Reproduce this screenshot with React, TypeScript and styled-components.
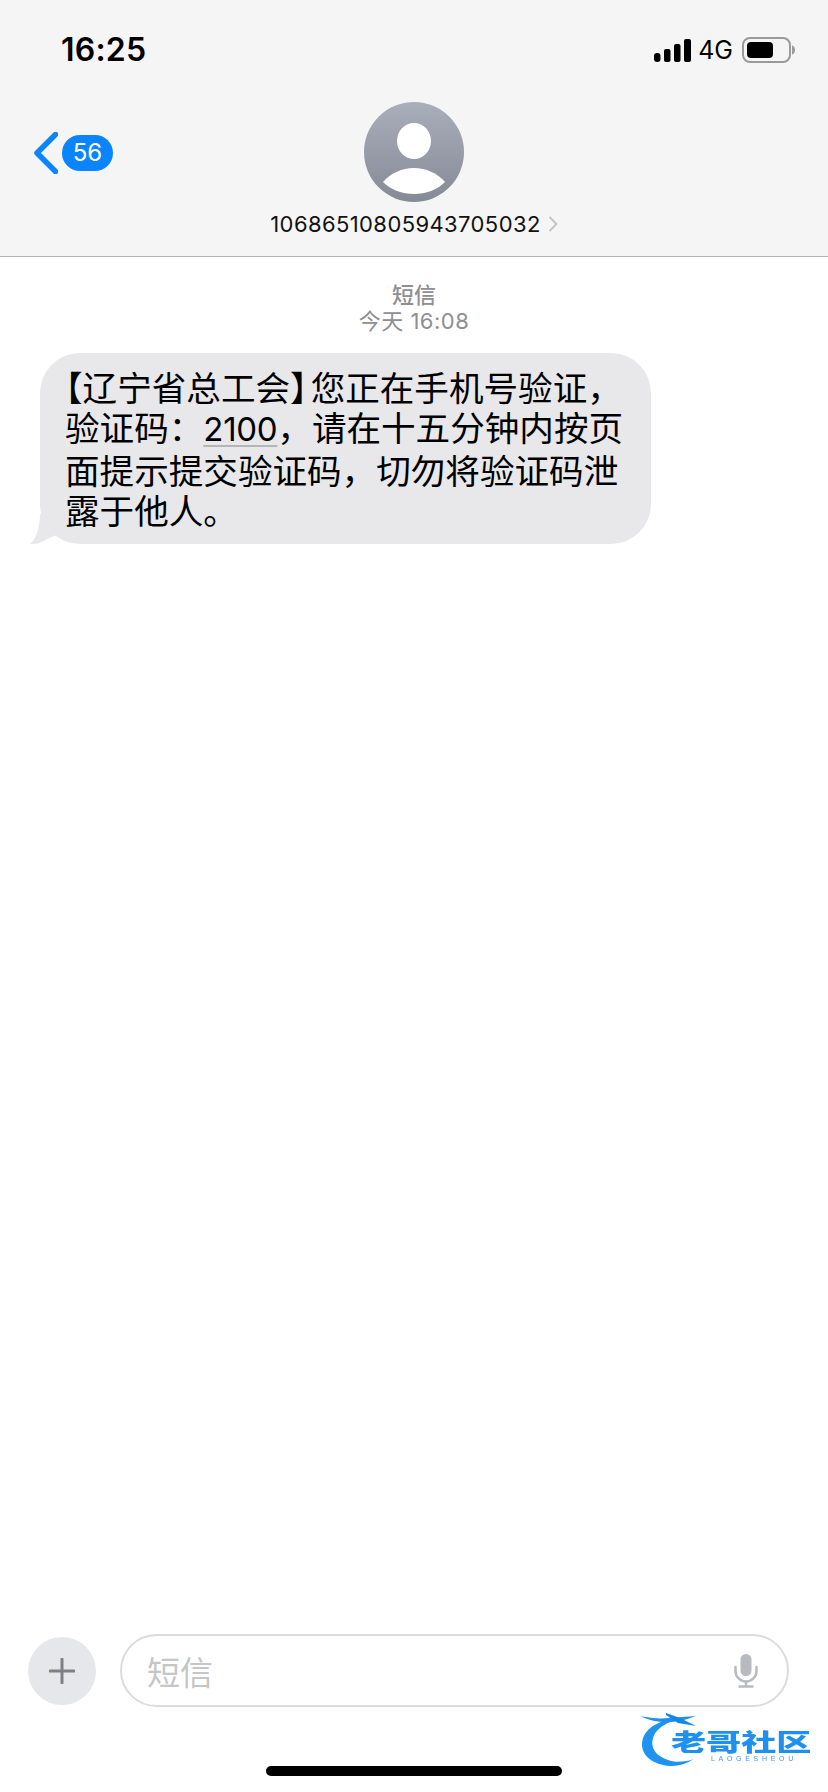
import React from 'react'
import styled, { createGlobalStyle } from 'styled-components'

const GlobalStyle = createGlobalStyle`
  html, body {
    margin: 0;
    padding: 0;
    background: #fff;
    font-family: Inter, "Noto Sans CJK SC", sans-serif;
  }
  * { box-sizing: border-box; }
`

const Page = styled.div`
  position: relative;
  width: 828px;
  height: 1792px;
  display: flex;
  flex-direction: column;
  overflow: hidden;
  background: #fff;
  color: #000;
`

const Header = styled.header`
  height: 257px;
  flex: none;
  background: #f5f5f5;
  border-bottom: 1px solid #b2b2b2;
`

const StatusBar = styled.div`
  height: 102px;
  padding: 32px 33px 0 61px;
  display: flex;
  justify-content: space-between;
  align-items: flex-start;
`

const Clock = styled.div`
  font-size: 32px;
  line-height: 36px;
  font-weight: 600;
  letter-spacing: 0.2px;
`

const StatusIcons = styled.div`
  display: flex;
  align-items: center;
  height: 36px;
  gap: 7px;
`

const Network = styled.span`
  font-size: 25px;
  line-height: 36px;
  font-weight: 400;
  margin-right: 2px;
`

const Nav = styled.div`
  display: grid;
  grid-template-columns: 1fr auto 1fr;
  align-items: flex-start;
`

const BackLink = styled.div`
  display: flex;
  align-items: center;
  gap: 4px;
  height: 100px;
  padding-top: 2px;
  padding-left: 34px;
`

const CountBadge = styled.span`
  width: 51px;
  height: 36px;
  border-radius: 18px;
  background: #0a84ff;
  color: #fff;
  font-size: 24px;
  line-height: 36px;
  text-align: center;
`

const Contact = styled.div`
  display: flex;
  flex-direction: column;
  align-items: center;
`

const Avatar = styled.div`
  width: 100px;
  height: 100px;
  border-radius: 50%;
  overflow: hidden;
  background: linear-gradient(180deg, #a9aebb 0%, #858a95 100%);
`

const ContactName = styled.div`
  display: flex;
  align-items: center;
  gap: 7px;
  margin-top: 8px;
  font-size: 22px;
  line-height: 28px;
  letter-spacing: 0.4px;
  color: #111;
`

const Thread = styled.main`
  flex: 1;
  padding: 25px 0 0 40px;
`

const ThreadMeta = styled.div`
  margin-left: -40px;
  text-align: center;
  color: #8e8e93;
  font-size: 22px;
  line-height: 26px;
  font-weight: 500;
`

const MetaTime = styled.div`
  font-weight: 400;
  letter-spacing: 0.5px;
`

const Bubble = styled.div`
  position: relative;
  width: 611px;
  height: 191px;
  margin-top: 19px;
  padding: 13px 0 0 25px;
  border-radius: 40px;
  background: #e8e8eb;
  font-family: "Noto Sans CJK SC", sans-serif;
  font-size: 34.6px;
  line-height: 40px;
  white-space: nowrap;
  color: #000;
`

const BubbleTail = styled.svg`
  position: absolute;
  left: -11px;
  bottom: 0;
`

const OpenBracket = styled.span`
  margin-left: -17px;
`

const CloseBracket = styled.span`
  margin-right: -14px;
`

const Code = styled.span`
  font-family: Inter, sans-serif;
  font-size: 33px;
  letter-spacing: -0.3px;
  text-decoration: underline;
  text-decoration-color: #b5b5b8;
  text-decoration-thickness: 2px;
  text-underline-offset: 4px;
`

const Composer = styled.footer`
  flex: none;
  height: 158px;
  padding: 0 39px 0 28px;
  display: flex;
  align-items: flex-start;
  gap: 24px;
`

const AddButton = styled.div`
  width: 68px;
  height: 68px;
  margin-top: 3px;
  flex: none;
  border-radius: 50%;
  background: #e6e7ea;
  display: flex;
  align-items: center;
  justify-content: center;
`

const InputField = styled.div`
  flex: 1;
  height: 73px;
  border: 2px solid #dcdcdc;
  border-radius: 37px;
  padding: 0 29px 0 25px;
  display: flex;
  align-items: center;
  justify-content: space-between;
`

const Placeholder = styled.span`
  font-family: "Noto Sans CJK SC", sans-serif;
  font-size: 33px;
  color: #c6c6c8;
`

const HomeIndicator = styled.div`
  position: absolute;
  left: 266px;
  bottom: 16px;
  width: 296px;
  height: 10px;
  border-radius: 5px;
  background: #000;
`

const Watermark = styled.div`
  position: absolute;
  left: 640px;
  top: 1710px;
  width: 176px;
  height: 60px;
  filter: blur(0.6px);
`

const WatermarkTitle = styled.span`
  position: absolute;
  left: 31px;
  top: 18px;
  font-family: "Noto Sans CJK SC", sans-serif;
  font-weight: 900;
  font-size: 30px;
  line-height: 32px;
  white-space: nowrap;
  transform: scaleX(1.17) scaleY(0.78);
  transform-origin: left top;
  color: #1e90ee;
`

const WatermarkSub = styled.span`
  position: absolute;
  left: 71px;
  top: 45px;
  font-family: "Liberation Sans", sans-serif;
  font-size: 7px;
  line-height: 8px;
  letter-spacing: 3.7px;
  white-space: nowrap;
  color: #3f9ae8;
`

const DragonSvg = styled.svg`
  position: absolute;
  left: 0;
  top: 0;
`

const App: React.FC = () => {
  return (
    <Page>
      <GlobalStyle />
      <Header>
        <StatusBar>
          <Clock>16:25</Clock>
          <StatusIcons>
            <svg width="37" height="23" viewBox="0 0 37 23" fill="#000">
              <rect x="0" y="14" width="6.5" height="9" rx="3" />
              <rect x="10" y="10" width="6.5" height="13" rx="2" />
              <rect x="20" y="5" width="6.5" height="18" rx="2" />
              <rect x="30" y="0" width="7" height="23" rx="2" />
            </svg>
            <Network>4G</Network>
            <svg width="53" height="26" viewBox="0 0 53 26">
              <rect x="1" y="1" width="47" height="24" rx="7" fill="none" stroke="#9a9a9a" strokeWidth="2" />
              <rect x="5" y="5" width="26" height="16" rx="4" fill="#000" />
              <path d="M50 8.5c2 .5 3 2.300 3 4.500s-1 4-3 4.500z" fill="#9a9a9a" />
            </svg>
          </StatusIcons>
        </StatusBar>
        <Nav>
          <BackLink>
            <svg width="24" height="42" viewBox="0 0 24 42" fill="none">
              <path d="M21.500 2.500 3 21l18.500 18.500" stroke="#0a84ff" strokeWidth="5.5" strokeLinecap="round" strokeLinejoin="round" />
            </svg>
            <CountBadge>56</CountBadge>
          </BackLink>
          <Contact>
            <Avatar>
              <svg width="100" height="100" viewBox="0 0 100 100" fill="#fff">
                <ellipse cx="50" cy="39" rx="17" ry="18" />
                <path d="M19 80C27 71 38 66 50 66s23 5 31 14c-8 8-19 12-31 12s-23-4-31-12z" />
              </svg>
            </Avatar>
            <ContactName>
              10686510805943705032
              <svg width="10" height="16" viewBox="0 0 10 16" fill="none">
                <path d="M1.500 1 8.500 8l-7 7" stroke="#c4c4c6" strokeWidth="2" />
              </svg>
            </ContactName>
          </Contact>
          <div />
        </Nav>
      </Header>

      <Thread>
        <ThreadMeta>
          短信
          <MetaTime>今天 16:08</MetaTime>
        </ThreadMeta>
        <Bubble>
          <BubbleTail width="30" height="30" viewBox="0 0 30 30" fill="#e8e8eb">
            <path d="M11 0C11 14 7 25 1 30 8 30.500 14 28 18 25L30 20V0z" />
          </BubbleTail>
          <OpenBracket>【</OpenBracket>辽宁省总工会<CloseBracket>】</CloseBracket>您正在手机号验证，
          <br />
          验证码：<Code>2100</Code>，请在十五分钟内按页
          <br />
          面提示提交验证码，切勿将验证码泄
          <br />
          露于他人。
        </Bubble>
      </Thread>

      <Composer>
        <AddButton>
          <svg width="26" height="26" viewBox="0 0 26 26" fill="none">
            <path d="M13 1v24M1 13h24" stroke="#7f8087" strokeWidth="3" strokeLinecap="round" />
          </svg>
        </AddButton>
        <InputField>
          <Placeholder>短信</Placeholder>
          <svg width="24" height="34" viewBox="0 0 24 34" fill="none">
            <rect x="6.500" y="0" width="11" height="22" rx="5.500" fill="#b8bac0" />
            <path d="M1.500 13v4a10.500 10.500 0 0 0 21 0v-4" stroke="#b8bac0" strokeWidth="2.500" strokeLinecap="round" />
            <path d="M12 27v5M4.500 32.500h15" stroke="#b8bac0" strokeWidth="2.500" />
          </svg>
        </InputField>
      </Composer>

      <Watermark>
        <DragonSvg width="80" height="60" viewBox="0 0 80 60" fill="none">
          <path d="M26 10C11 15 3 22 2 33c-1 13 12 22 28 23 8 .5 16-2 24-7-8 3-19 4-26 1C16 46 10 38 13 28 15 21 21 16 30 12z" fill="#1e94f0" />
          <path d="M0 6c10 2 20 3 28 2l28-2c-8 3-14 5-24 6C22 13 10 11 0 6z" fill="#1f8fee" />
          <path d="M26 3l14 5 16 8-18-3-12-8z" fill="#1685e8" />
        </DragonSvg>
        <WatermarkTitle>老哥社区</WatermarkTitle>
        <WatermarkSub>LAOGESHEOU</WatermarkSub>
      </Watermark>

      <HomeIndicator />
    </Page>
  )
}

export default App
